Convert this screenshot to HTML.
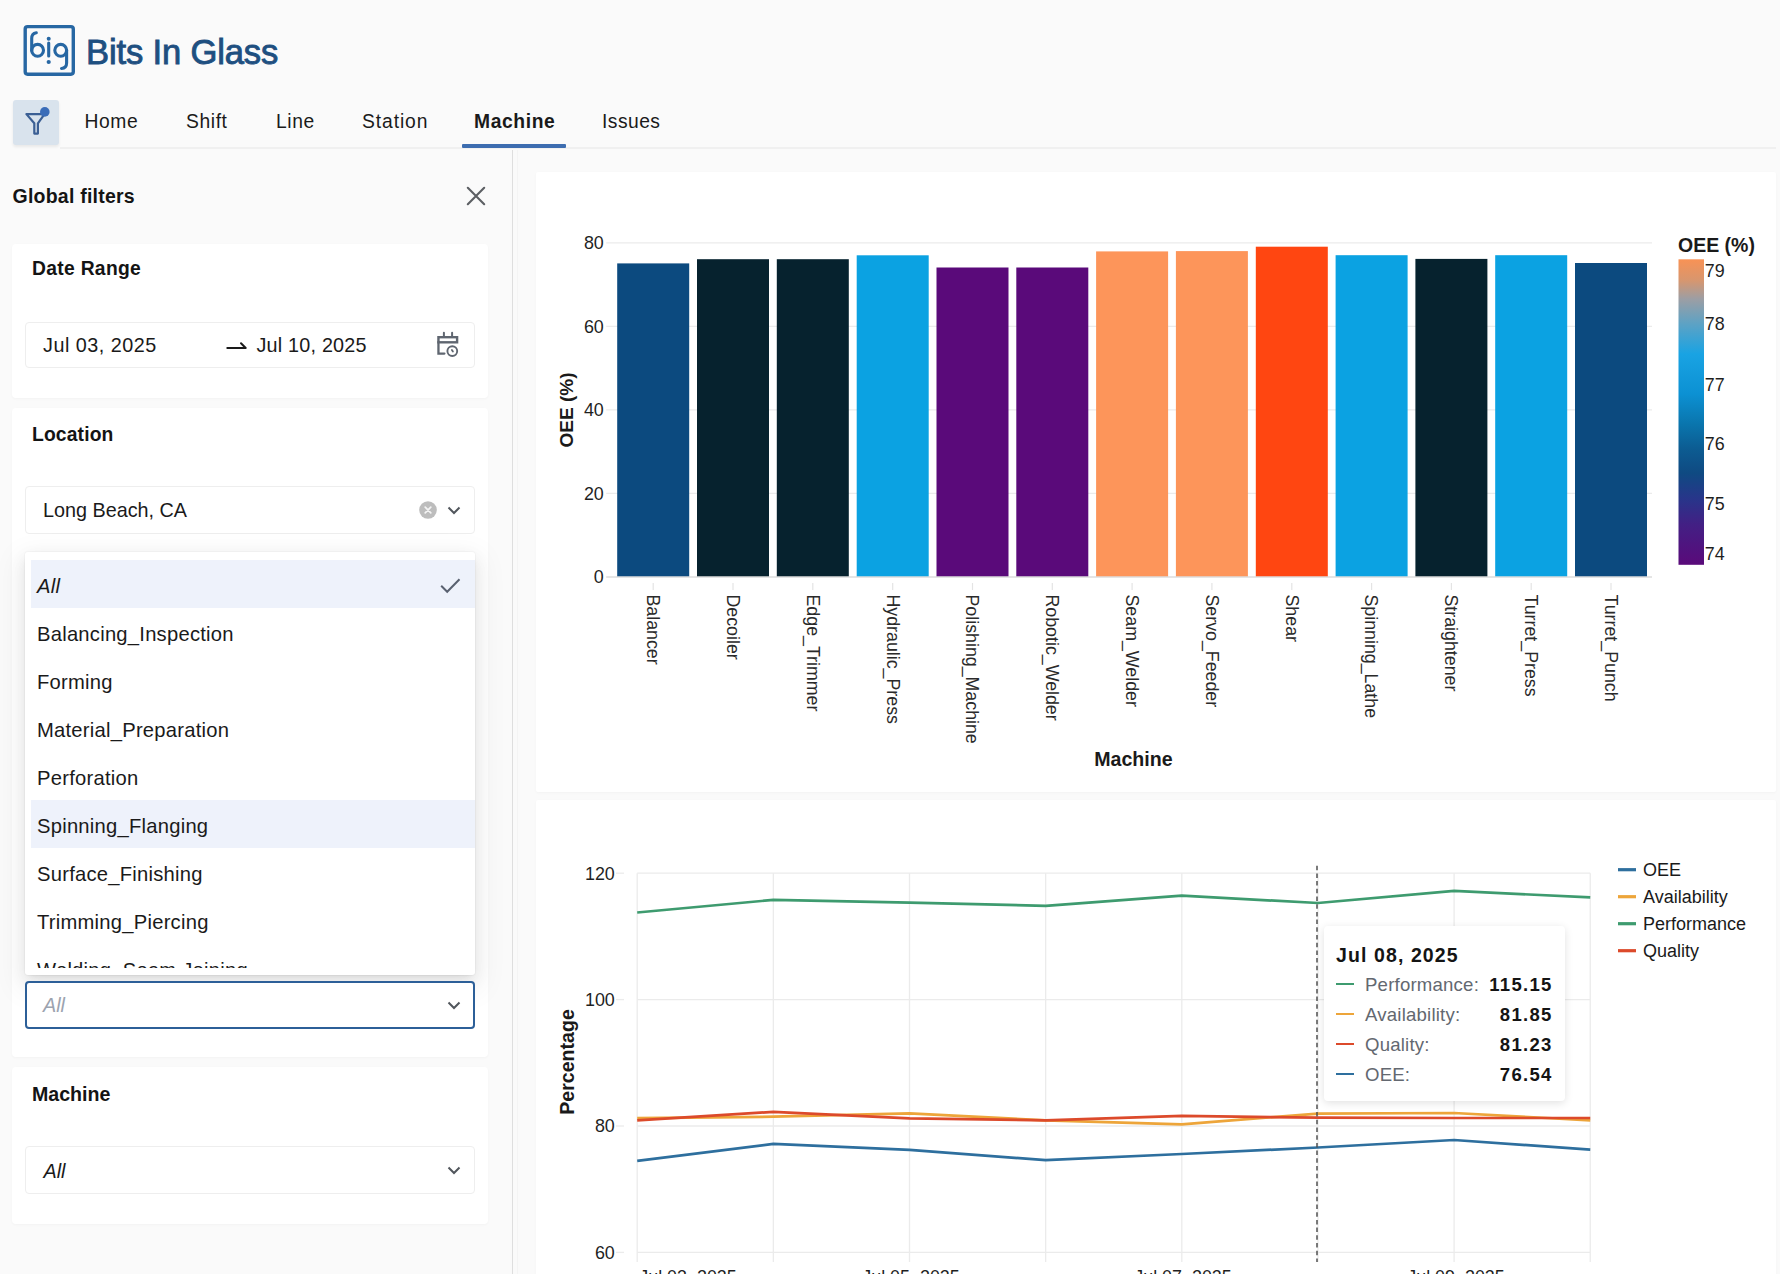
<!DOCTYPE html>
<html><head><meta charset="utf-8"><style>
*{margin:0;padding:0;box-sizing:border-box}
html,body{width:1780px;height:1274px;overflow:hidden;background:#fafafa;font-family:"Liberation Sans", sans-serif;color:#1a1a1a}
.a{position:absolute;white-space:nowrap}
.card{position:absolute;background:#fff;border-radius:4px;box-shadow:0 1px 3px rgba(0,0,0,0.03)}
.inp{position:absolute;background:#fff;border:1px solid #eeeeee;border-radius:4px}
.nav{position:absolute;top:111px;font-size:19.3px;line-height:22px;letter-spacing:0.6px;color:#1a1a1a}
.lbl{position:absolute;font-size:19.5px;font-weight:bold;line-height:22px;color:#141414}
.ddrow{position:absolute;left:6px;width:444px;height:48px;padding-left:6px;font-size:20.2px;line-height:52px;letter-spacing:0.24px;color:#1a1a1a}
svg text{font-family:"Liberation Sans", sans-serif}
</style></head><body>
<!-- logo -->
<svg class="a" style="left:0;top:0" width="90" height="90" viewBox="0 0 90 90">
 <rect x="25.2" y="26.6" width="48.1" height="47.6" rx="2.4" fill="none" stroke="#2767a3" stroke-width="3.4"/>
 <g fill="none" stroke="#2767a3" stroke-width="3.1" stroke-linecap="round">
  <path d="M36.3 32.8 C33.5 33.3 31.7 35 31.7 38.5 L31.7 50.5"/>
  <circle cx="37.6" cy="50.3" r="5.9"/>
  <path d="M48.7 43 L48.7 56"/>
  <circle cx="60.7" cy="50.3" r="5.9"/>
  <path d="M66.6 50 L66.6 63 C66.6 66.5 64.5 68.3 61.5 68.5"/>
 </g>
 <circle cx="48.7" cy="38.8" r="2" fill="#2767a3"/>
 <circle cx="48.7" cy="62" r="2.1" fill="#2767a3"/>
</svg>
<div class="a" style="left:86px;top:31.5px;font-size:34.6px;line-height:40px;font-weight:normal;-webkit-text-stroke:0.9px #1e4f80;letter-spacing:-0.15px;color:#1e4f80">Bits In Glass</div>

<!-- nav -->
<div class="a" style="left:13px;top:100px;width:46px;height:44.5px;background:#d9e3ed;border-radius:3px;box-shadow:0 2px 3px rgba(0,0,0,0.07)"></div>
<svg class="a" style="left:13px;top:100px" width="46" height="46" viewBox="0 0 46 46">
 <path d="M13.4 14.1 H31.5 L24.9 23.3 V33.6 H21.3 V23.3 Z" fill="none" stroke="#3b5f94" stroke-width="2.2" stroke-linejoin="round"/>
 <circle cx="31.8" cy="11.9" r="4.8" fill="#3a6cb8"/>
</svg>
<div class="nav" style="left:84.5px">Home</div>
<div class="nav" style="left:186px">Shift</div>
<div class="nav" style="left:276px">Line</div>
<div class="nav" style="left:362px;letter-spacing:0.9px">Station</div>
<div class="nav" style="left:474px;font-weight:bold">Machine</div>
<div class="nav" style="left:602px;letter-spacing:0.45px">Issues</div>
<div class="a" style="left:60px;top:147px;width:1716px;height:2px;background:#f0f0f0"></div>
<div class="a" style="left:462px;top:144px;width:104px;height:4px;background:#3d6db0;border-radius:1px"></div>

<!-- left panel -->
<div class="a" style="left:512px;top:150px;width:1.2px;height:1125px;background:#dedede"></div><div class="a" style="left:516.5px;top:150px;width:1px;height:1125px;background:#f4f4f4"></div>
<div class="lbl" style="left:12.5px;top:185px;letter-spacing:0.23px">Global filters</div>
<svg class="a" style="left:464px;top:184px" width="24" height="24" viewBox="0 0 24 24"><path d="M3.8 3.8 L20.2 20.2 M20.2 3.8 L3.8 20.2" stroke="#5c5f63" stroke-width="2.1" stroke-linecap="round"/></svg>

<div class="card" style="left:12px;top:244px;width:476px;height:154px"></div>
<div class="lbl" style="left:32px;top:258px;font-size:19.3px;letter-spacing:0.3px">Date Range</div>
<div class="inp" style="left:24.5px;top:321.5px;width:450.5px;height:46.5px"></div>
<div class="a" style="left:43px;top:334px;font-size:19.8px;line-height:22px;letter-spacing:0.5px">Jul 03, 2025</div>
<svg class="a" style="left:224px;top:340px" width="26" height="14" viewBox="0 0 26 14"><path d="M3.3 8 H21.7 L17 3.2" fill="none" stroke="#1a1a1a" stroke-width="2" stroke-linecap="round" stroke-linejoin="round"/></svg>
<div class="a" style="left:256.5px;top:334px;font-size:19.8px;line-height:22px;letter-spacing:0.2px">Jul 10, 2025</div>
<svg class="a" style="left:425px;top:325px" width="50" height="40" viewBox="0 0 50 40">
 <rect x="13.45" y="12.2" width="18.65" height="5.1" fill="none" stroke="#5f6670" stroke-width="2.4"/>
 <path d="M18.9 7.8 V11.5 M27.1 7.8 V11.5" stroke="#5f6670" stroke-width="2" stroke-linecap="round"/>
 <path d="M13.45 17 V28.6 H19.4" fill="none" stroke="#5f6670" stroke-width="2.3" stroke-linecap="round"/>
 <circle cx="27.3" cy="26.1" r="4.9" fill="none" stroke="#5f6670" stroke-width="1.9"/>
 <path d="M26.9 24.9 L27.9 26.5" stroke="#5f6670" stroke-width="1.8" stroke-linecap="round"/>
</svg>

<div class="card" style="left:12px;top:408px;width:476px;height:649px"></div>
<div class="lbl" style="left:32px;top:423.5px;font-size:19.3px;letter-spacing:0.15px">Location</div>
<div class="inp" style="left:24.5px;top:485.5px;width:450.5px;height:48px"></div>
<div class="a" style="left:43px;top:499px;font-size:19.8px;line-height:22px">Long Beach, CA</div>
<svg class="a" style="left:418px;top:500px" width="20" height="20" viewBox="0 0 20 20"><circle cx="10" cy="10" r="8.8" fill="#bdbdbd"/><path d="M7.2 7.2 L12.8 12.8 M12.8 7.2 L7.2 12.8" stroke="#f4f4f4" stroke-width="1.7" stroke-linecap="round"/></svg>
<svg style="position:absolute;left:447px;top:505px" width="14" height="10" viewBox="0 0 14 10"><path d="M1.5 2.5 L7 8 L12.5 2.5" fill="none" stroke="#51565c" stroke-width="2"/></svg>


<div class="card" style="left:12px;top:1067px;width:476px;height:157px"></div>
<div class="lbl" style="left:32px;top:1083px;font-size:19.6px">Machine</div>
<div class="inp" style="left:24.5px;top:1146px;width:450.5px;height:48px"></div>
<div class="a" style="left:43.5px;top:1160px;font-size:19.8px;line-height:22px;font-style:italic">All</div>
<svg style="position:absolute;left:447px;top:1165px" width="14" height="10" viewBox="0 0 14 10"><path d="M1.5 2.5 L7 8 L12.5 2.5" fill="none" stroke="#51565c" stroke-width="2"/></svg>

<!-- dropdown -->
<div class="a" style="left:25px;top:552px;width:450px;height:423px;background:#fff;border-radius:3px;box-shadow:0 0 0 1px rgba(0,0,0,0.025),0 6px 16px 0 rgba(0,0,0,0.08),0 3px 6px -4px rgba(0,0,0,0.12),0 9px 28px 8px rgba(0,0,0,0.05)"></div>
<div class="inp" style="left:24.5px;top:981px;width:450.5px;height:47.5px;border:2.7px solid #2c5f98"></div>
<div class="a" style="left:43px;top:994px;font-size:19.8px;line-height:22px;font-style:italic;color:#9ca3af">All</div>
<svg style="position:absolute;left:447px;top:1000px" width="14" height="10" viewBox="0 0 14 10"><path d="M1.5 2.5 L7 8 L12.5 2.5" fill="none" stroke="#51565c" stroke-width="2"/></svg>
<div class="a" style="left:25px;top:552px;width:450px;height:416px;overflow:hidden">
 <div class="ddrow" style="top:8px;background:#eef2fb;font-style:italic">All</div>
 <svg class="a" style="left:413px;top:22px" width="24" height="22" viewBox="0 0 24 22"><path d="M3.2 11.8 L9.2 17.8 L21.5 5.2" fill="none" stroke="#596170" stroke-width="2"/></svg>
 <div class="ddrow" style="top:56px;">Balancing_Inspection</div><div class="ddrow" style="top:104px;">Forming</div><div class="ddrow" style="top:152px;">Material_Preparation</div><div class="ddrow" style="top:200px;">Perforation</div><div class="ddrow" style="top:248px;background:#eef2fb;">Spinning_Flanging</div><div class="ddrow" style="top:296px;">Surface_Finishing</div><div class="ddrow" style="top:344px;">Trimming_Piercing</div><div class="ddrow" style="top:392px;">Welding_Seam Joining</div>
</div>

<!-- right cards -->
<div class="card" style="left:536px;top:172px;width:1240px;height:620px;border-radius:2px"></div>
<div class="card" style="left:536px;top:800px;width:1240px;height:500px;border-radius:2px"></div>
<svg class="a" style="left:0;top:0" width="1780" height="1274" viewBox="0 0 1780 1274">
<line x1="606.2" x2="1652" y1="493.4" y2="493.4" stroke="#ebebeb" stroke-width="1.3"/><line x1="606.2" x2="1652" y1="409.9" y2="409.9" stroke="#ebebeb" stroke-width="1.3"/><line x1="606.2" x2="1652" y1="326.4" y2="326.4" stroke="#ebebeb" stroke-width="1.3"/><line x1="606.2" x2="1652" y1="242.8" y2="242.8" stroke="#ebebeb" stroke-width="1.3"/><text x="603.8" y="583.3" text-anchor="end" font-size="17.9" fill="#1f1f1f">0</text><text x="603.8" y="499.8" text-anchor="end" font-size="17.9" fill="#1f1f1f">20</text><text x="603.8" y="416.2" text-anchor="end" font-size="17.9" fill="#1f1f1f">40</text><text x="603.8" y="332.7" text-anchor="end" font-size="17.9" fill="#1f1f1f">60</text><text x="603.8" y="249.1" text-anchor="end" font-size="17.9" fill="#1f1f1f">80</text><rect x="617.2" y="263.4" width="72.0" height="313.6" fill="#0c4a7f"/><line x1="653.2" x2="653.2" y1="583" y2="590" stroke="#e4e4e4" stroke-width="1.2"/><text transform="translate(647.0,594.5) rotate(90)" font-size="17.8" fill="#2a2a2a">Balancer</text><rect x="697.0" y="259.2" width="72.0" height="317.8" fill="#06222e"/><line x1="733.0" x2="733.0" y1="583" y2="590" stroke="#e4e4e4" stroke-width="1.2"/><text transform="translate(726.8,594.5) rotate(90)" font-size="17.8" fill="#2a2a2a">Decoiler</text><rect x="776.8" y="259.2" width="72.0" height="317.8" fill="#06222e"/><line x1="812.8" x2="812.8" y1="583" y2="590" stroke="#e4e4e4" stroke-width="1.2"/><text transform="translate(806.6,594.5) rotate(90)" font-size="17.8" fill="#2a2a2a">Edge_Trimmer</text><rect x="856.7" y="255.3" width="72.0" height="321.7" fill="#0ba2e2"/><line x1="892.7" x2="892.7" y1="583" y2="590" stroke="#e4e4e4" stroke-width="1.2"/><text transform="translate(886.5,594.5) rotate(90)" font-size="17.8" fill="#2a2a2a">Hydraulic_Press</text><rect x="936.5" y="267.5" width="72.0" height="309.5" fill="#5a0a7a"/><line x1="972.5" x2="972.5" y1="583" y2="590" stroke="#e4e4e4" stroke-width="1.2"/><text transform="translate(966.3,594.5) rotate(90)" font-size="17.8" fill="#2a2a2a">Polishing_Machine</text><rect x="1016.3" y="267.5" width="72.0" height="309.5" fill="#5a0a7a"/><line x1="1052.3" x2="1052.3" y1="583" y2="590" stroke="#e4e4e4" stroke-width="1.2"/><text transform="translate(1046.1,594.5) rotate(90)" font-size="17.8" fill="#2a2a2a">Robotic_Welder</text><rect x="1096.1" y="251.4" width="72.0" height="325.6" fill="#fd955a"/><line x1="1132.1" x2="1132.1" y1="583" y2="590" stroke="#e4e4e4" stroke-width="1.2"/><text transform="translate(1125.9,594.5) rotate(90)" font-size="17.8" fill="#2a2a2a">Seam_Welder</text><rect x="1175.9" y="251.1" width="72.0" height="325.9" fill="#fd955a"/><line x1="1211.9" x2="1211.9" y1="583" y2="590" stroke="#e4e4e4" stroke-width="1.2"/><text transform="translate(1205.7,594.5) rotate(90)" font-size="17.8" fill="#2a2a2a">Servo_Feeder</text><rect x="1255.8" y="246.7" width="72.0" height="330.3" fill="#ff4611"/><line x1="1291.8" x2="1291.8" y1="583" y2="590" stroke="#e4e4e4" stroke-width="1.2"/><text transform="translate(1285.6,594.5) rotate(90)" font-size="17.8" fill="#2a2a2a">Shear</text><rect x="1335.6" y="255.2" width="72.0" height="321.8" fill="#0ba2e2"/><line x1="1371.6" x2="1371.6" y1="583" y2="590" stroke="#e4e4e4" stroke-width="1.2"/><text transform="translate(1365.4,594.5) rotate(90)" font-size="17.8" fill="#2a2a2a">Spinning_Lathe</text><rect x="1415.4" y="258.9" width="72.0" height="318.1" fill="#06222e"/><line x1="1451.4" x2="1451.4" y1="583" y2="590" stroke="#e4e4e4" stroke-width="1.2"/><text transform="translate(1445.2,594.5) rotate(90)" font-size="17.8" fill="#2a2a2a">Straightener</text><rect x="1495.2" y="255.2" width="72.0" height="321.8" fill="#0ba2e2"/><line x1="1531.2" x2="1531.2" y1="583" y2="590" stroke="#e4e4e4" stroke-width="1.2"/><text transform="translate(1525.0,594.5) rotate(90)" font-size="17.8" fill="#2a2a2a">Turret_Press</text><rect x="1575.0" y="263.0" width="72.0" height="314.0" fill="#0c4a7f"/><line x1="1611.0" x2="1611.0" y1="583" y2="590" stroke="#e4e4e4" stroke-width="1.2"/><text transform="translate(1604.8,594.5) rotate(90)" font-size="17.8" fill="#2a2a2a">Turret_Punch</text><line x1="606.2" x2="1652" y1="577.0" y2="577.0" stroke="#dcdcdc" stroke-width="1.3"/><text transform="translate(573,410) rotate(-90)" text-anchor="middle" font-size="19" font-weight="bold" fill="#1a1a1a">OEE (%)</text><text x="1133.4" y="766" text-anchor="middle" font-size="19.6" font-weight="bold" fill="#1a1a1a">Machine</text><defs><linearGradient id="cb" x1="0" y1="0" x2="0" y2="1">
<stop offset="0" stop-color="#f89255"/><stop offset="0.068" stop-color="#d8966e"/><stop offset="0.13" stop-color="#9c9ea4"/>
<stop offset="0.21" stop-color="#5ea2c4"/><stop offset="0.31" stop-color="#19a3e3"/><stop offset="0.44" stop-color="#0c91d3"/>
<stop offset="0.54" stop-color="#0a75ad"/><stop offset="0.62" stop-color="#0c5c92"/><stop offset="0.70" stop-color="#0f4a82"/>
<stop offset="0.785" stop-color="#28358a"/><stop offset="0.87" stop-color="#431f84"/><stop offset="1" stop-color="#5a0a7a"/></linearGradient></defs><rect x="1678.5" y="259.3" width="25.5" height="305.5" fill="url(#cb)"/><text x="1678" y="251.5" font-size="19.5" font-weight="bold" fill="#1a1a1a">OEE (%)</text><text x="1704.8" y="276.8" font-size="17.9" fill="#1f1f1f">79</text><text x="1704.8" y="330.4" font-size="17.9" fill="#1f1f1f">78</text><text x="1704.8" y="390.8" font-size="17.9" fill="#1f1f1f">77</text><text x="1704.8" y="449.9" font-size="17.9" fill="#1f1f1f">76</text><text x="1704.8" y="510.3" font-size="17.9" fill="#1f1f1f">75</text><text x="1704.8" y="559.8" font-size="17.9" fill="#1f1f1f">74</text>
<line x1="637.2" x2="1590.25" y1="1252.4" y2="1252.4" stroke="#ebebeb" stroke-width="1.3"/><line x1="616" x2="624" y1="1252.4" y2="1252.4" stroke="#ebebeb" stroke-width="1.3"/><text x="614.8" y="1258.7" text-anchor="end" font-size="17.9" fill="#1f1f1f">60</text><line x1="637.2" x2="1590.25" y1="1126.0" y2="1126.0" stroke="#ebebeb" stroke-width="1.3"/><line x1="616" x2="624" y1="1126.0" y2="1126.0" stroke="#ebebeb" stroke-width="1.3"/><text x="614.8" y="1132.3" text-anchor="end" font-size="17.9" fill="#1f1f1f">80</text><line x1="637.2" x2="1590.25" y1="999.6" y2="999.6" stroke="#ebebeb" stroke-width="1.3"/><line x1="616" x2="624" y1="999.6" y2="999.6" stroke="#ebebeb" stroke-width="1.3"/><text x="614.8" y="1005.9" text-anchor="end" font-size="17.9" fill="#1f1f1f">100</text><line x1="637.2" x2="1590.25" y1="873.2" y2="873.2" stroke="#ebebeb" stroke-width="1.3"/><line x1="616" x2="624" y1="873.2" y2="873.2" stroke="#ebebeb" stroke-width="1.3"/><text x="614.8" y="879.5" text-anchor="end" font-size="17.9" fill="#1f1f1f">120</text><line x1="637.2" x2="637.2" y1="873.2" y2="1262" stroke="#ebebeb" stroke-width="1.3"/><line x1="773.35" x2="773.35" y1="873.2" y2="1262" stroke="#ebebeb" stroke-width="1.3"/><line x1="909.5" x2="909.5" y1="873.2" y2="1262" stroke="#ebebeb" stroke-width="1.3"/><line x1="1045.65" x2="1045.65" y1="873.2" y2="1262" stroke="#ebebeb" stroke-width="1.3"/><line x1="1181.8" x2="1181.8" y1="873.2" y2="1262" stroke="#ebebeb" stroke-width="1.3"/><line x1="1317.95" x2="1317.95" y1="873.2" y2="1262" stroke="#ebebeb" stroke-width="1.3"/><line x1="1454.1" x2="1454.1" y1="873.2" y2="1262" stroke="#ebebeb" stroke-width="1.3"/><line x1="1590.25" x2="1590.25" y1="873.2" y2="1262" stroke="#ebebeb" stroke-width="1.3"/><polyline points="637.2,912.5 773.35,899.9 909.5,902.6 1045.65,905.8 1181.8,895.7 1317.95,903.0 1454.1,890.9 1590.25,897.4" fill="none" stroke="#3e9b6f" stroke-width="2.7" stroke-linejoin="round"/><polyline points="637.2,1118.1 773.35,1116.7 909.5,1113.3 1045.65,1120.3 1181.8,1124.3 1317.95,1113.6 1454.1,1113.0 1590.25,1120.3" fill="none" stroke="#eda53a" stroke-width="2.7" stroke-linejoin="round"/><polyline points="637.2,1120.3 773.35,1111.9 909.5,1118.3 1045.65,1120.3 1181.8,1115.8 1317.95,1117.7 1454.1,1118.0 1590.25,1118.0" fill="none" stroke="#dc4a2b" stroke-width="2.7" stroke-linejoin="round"/><polyline points="637.2,1160.8 773.35,1143.9 909.5,1149.8 1045.65,1160.2 1181.8,1154.0 1317.95,1147.5 1454.1,1140.0 1590.25,1149.6" fill="none" stroke="#2e6f9e" stroke-width="2.7" stroke-linejoin="round"/><line x1="1317" x2="1317" y1="865.7" y2="1262" stroke="#4a4a4a" stroke-width="1.45" stroke-dasharray="4.5 3.2"/><text transform="translate(574,1062) rotate(-90)" text-anchor="middle" font-size="19.6" font-weight="bold" fill="#1a1a1a">Percentage</text><text x="688" y="1283" text-anchor="middle" font-size="17.9" fill="#1f1f1f">Jul 03, 2025</text><text x="911" y="1283" text-anchor="middle" font-size="17.9" fill="#1f1f1f">Jul 05, 2025</text><text x="1183" y="1283" text-anchor="middle" font-size="17.9" fill="#1f1f1f">Jul 07, 2025</text><text x="1456" y="1283" text-anchor="middle" font-size="17.9" fill="#1f1f1f">Jul 09, 2025</text><line x1="1618" x2="1636" y1="869.7" y2="869.7" stroke="#2e6f9e" stroke-width="3.2"/><text x="1643" y="876.1" font-size="18" fill="#1a1a1a">OEE</text><line x1="1618" x2="1636" y1="896.7" y2="896.7" stroke="#eda53a" stroke-width="3.2"/><text x="1643" y="903.1" font-size="18" fill="#1a1a1a">Availability</text><line x1="1618" x2="1636" y1="923.7" y2="923.7" stroke="#3e9b6f" stroke-width="3.2"/><text x="1643" y="930.1" font-size="18" fill="#1a1a1a">Performance</text><line x1="1618" x2="1636" y1="950.7" y2="950.7" stroke="#dc4a2b" stroke-width="3.2"/><text x="1643" y="957.1" font-size="18" fill="#1a1a1a">Quality</text>
</svg>

<!-- tooltip -->
<div class="a" style="left:1324px;top:926px;width:241px;height:175px;background:#fff;border-radius:4px;box-shadow:0 2px 8px rgba(0,0,0,0.12)"></div>
<div class="a" style="left:1336px;top:944px;font-size:19.5px;line-height:22px;font-weight:bold;letter-spacing:1.1px;color:#141414">Jul 08, 2025</div>
<div class="a" style="left:1336px;top:982.9px;width:18px;height:2.6px;background:#3e9b6f"></div><div class="a" style="left:1365px;top:973.8px;font-size:18.6px;line-height:22px;letter-spacing:0.2px;color:#636870">Performance:</div><div class="a" style="left:1452.6px;width:100px;text-align:right;top:973.8px;font-size:18.5px;line-height:22px;font-weight:bold;letter-spacing:1.3px;color:#141414">115.15</div><div class="a" style="left:1336px;top:1012.9px;width:18px;height:2.6px;background:#eda53a"></div><div class="a" style="left:1365px;top:1003.8px;font-size:18.6px;line-height:22px;letter-spacing:0.2px;color:#636870">Availability:</div><div class="a" style="left:1452.6px;width:100px;text-align:right;top:1003.8px;font-size:18.5px;line-height:22px;font-weight:bold;letter-spacing:1.3px;color:#141414">81.85</div><div class="a" style="left:1336px;top:1042.9px;width:18px;height:2.6px;background:#dc4a2b"></div><div class="a" style="left:1365px;top:1033.8px;font-size:18.6px;line-height:22px;letter-spacing:0.2px;color:#636870">Quality:</div><div class="a" style="left:1452.6px;width:100px;text-align:right;top:1033.8px;font-size:18.5px;line-height:22px;font-weight:bold;letter-spacing:1.3px;color:#141414">81.23</div><div class="a" style="left:1336px;top:1072.9px;width:18px;height:2.6px;background:#2e6f9e"></div><div class="a" style="left:1365px;top:1063.8px;font-size:18.6px;line-height:22px;letter-spacing:0.2px;color:#636870">OEE:</div><div class="a" style="left:1452.6px;width:100px;text-align:right;top:1063.8px;font-size:18.5px;line-height:22px;font-weight:bold;letter-spacing:1.3px;color:#141414">76.54</div>
</body></html>
